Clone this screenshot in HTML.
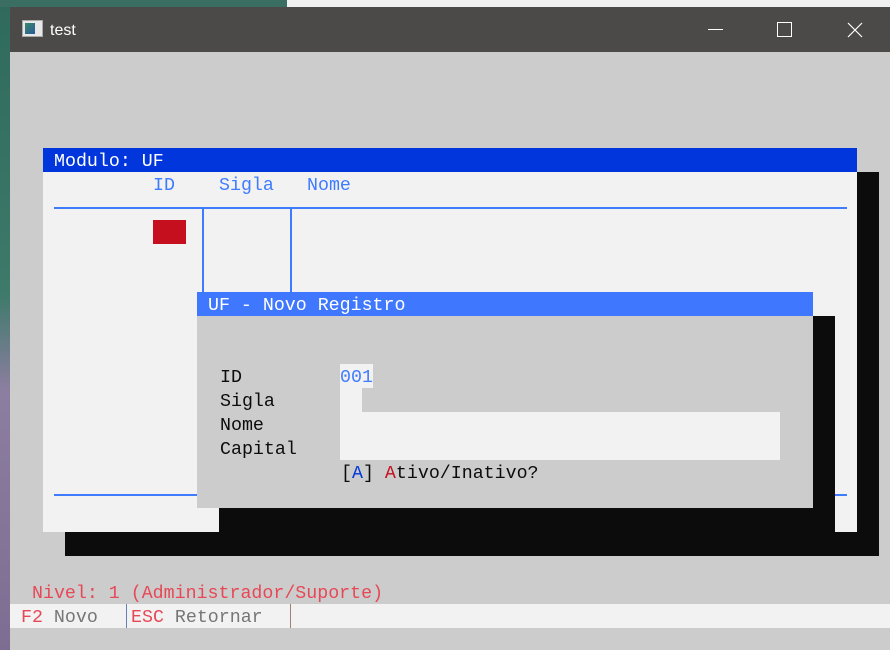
<!DOCTYPE html>
<html><head><meta charset="utf-8"><style>
*{margin:0;padding:0;box-sizing:border-box}
body{width:890px;height:650px;position:relative;overflow:hidden;background:#ccc;font-family:"Liberation Mono",monospace;}
.a{position:absolute}
.t{position:absolute;font-size:18.3px;line-height:24px;white-space:pre;height:24px;margin-top:2px}
</style></head><body>
<div class="a" style="left:0;top:0;width:10px;height:650px;background:linear-gradient(#2f6a5c 0%,#3d7a6a 45%,#8c7ea0 60%,#7e6d92 100%)"></div>
<div class="a" style="left:0;top:0;width:287px;height:7px;background:#3a6e62"></div>
<div class="a" style="left:287px;top:0;width:603px;height:7px;background:#f0f0f0"></div>
<div class="a" style="left:10px;top:7px;width:880px;height:45px;background:#4b4a48"></div>
<div class="a" style="left:22px;top:20px;width:21px;height:17px;background:#e8e8e8;border:1px solid #aaa"><div class="a" style="left:2px;top:2px;width:10px;height:11px;background:linear-gradient(135deg,#3a8a6a,#2a5a9a)"></div></div>
<div class="a" style="left:50px;top:20px;color:#fff;font-family:'Liberation Sans',sans-serif;font-size:16px;line-height:22px">test</div>
<div class="a" style="left:708px;top:29px;width:15px;height:1px;background:#fff"></div>
<div class="a" style="left:777px;top:22px;width:15px;height:15px;border:1px solid #fff"></div>
<svg class="a" style="left:847px;top:22px" width="16" height="16"><path d="M1 1L15 15M15 1L1 15" stroke="#fff" stroke-width="1.2"/></svg>

<div class="a" style="left:857px;top:172px;width:22px;height:384px;background:#0c0c0c"></div>
<div class="a" style="left:65px;top:532px;width:814px;height:24px;background:#0c0c0c"></div>
<div class="a" style="left:43px;top:148px;width:814px;height:24px;background:#0036db"></div>
<div class="a" style="left:43px;top:172px;width:814px;height:360px;background:#f2f2f2"></div>
<div class="t" style="left:54px;top:148px;color:#fff">Modulo: UF</div>
<div class="t" style="left:153px;top:172px;color:#3f7bff">ID</div>
<div class="t" style="left:219px;top:172px;color:#3f7bff">Sigla</div>
<div class="t" style="left:307px;top:172px;color:#3f7bff">Nome</div>
<div class="a" style="left:54px;top:207px;width:793px;height:2px;background:#3f7bff"></div>
<div class="a" style="left:202px;top:208px;width:2px;height:90px;background:#3f7bff"></div>
<div class="a" style="left:290px;top:208px;width:2px;height:90px;background:#3f7bff"></div>
<div class="a" style="left:153px;top:220px;width:33px;height:24px;background:#c50f1f"></div>
<div class="a" style="left:54px;top:494px;width:793px;height:2px;background:#3f7bff"></div>

<div class="a" style="left:813px;top:316px;width:22px;height:216px;background:#0c0c0c"></div>
<div class="a" style="left:219px;top:508px;width:616px;height:24px;background:#0c0c0c"></div>
<div class="a" style="left:197px;top:292px;width:616px;height:24px;background:#3f78ff"></div>
<div class="a" style="left:197px;top:316px;width:616px;height:192px;background:#ccc"></div>
<div class="t" style="left:208px;top:292px;color:#fff">UF - Novo Registro</div>
<div class="t" style="left:220px;top:364px;color:#0c0c0c">ID</div>
<div class="t" style="left:220px;top:388px;color:#0c0c0c">Sigla</div>
<div class="t" style="left:220px;top:412px;color:#0c0c0c">Nome</div>
<div class="t" style="left:220px;top:436px;color:#0c0c0c">Capital</div>
<div class="a" style="left:340px;top:364px;width:33px;height:24px;background:#f2f2f2"></div>
<div class="a" style="left:340px;top:388px;width:22px;height:24px;background:#f2f2f2"></div>
<div class="a" style="left:340px;top:412px;width:440px;height:48px;background:#f2f2f2"></div>
<div class="t" style="left:340px;top:364px;color:#3f7bff">001</div>
<div class="t" style="left:341px;top:460px;color:#0c0c0c">[<span style="color:#0037da">A</span>] <span style="color:#c50f1f">A</span>tivo/Inativo?</div>

<div class="t" style="left:32px;top:580px;color:#e74856">Nivel: 1 (Administrador/Suporte)</div>
<div class="a" style="left:10px;top:604px;width:880px;height:24px;background:#f2f2f2"></div>
<div class="t" style="left:21px;top:604px;color:#e74856">F2 <span style="color:#767676">Novo</span></div>
<div class="a" style="left:126px;top:604px;width:1px;height:24px;background:#6a7fb0"></div>
<div class="t" style="left:131px;top:604px;color:#e74856">ESC <span style="color:#767676">Retornar</span></div>
<div class="a" style="left:290px;top:604px;width:1px;height:24px;background:#a08070"></div>
</body></html>
